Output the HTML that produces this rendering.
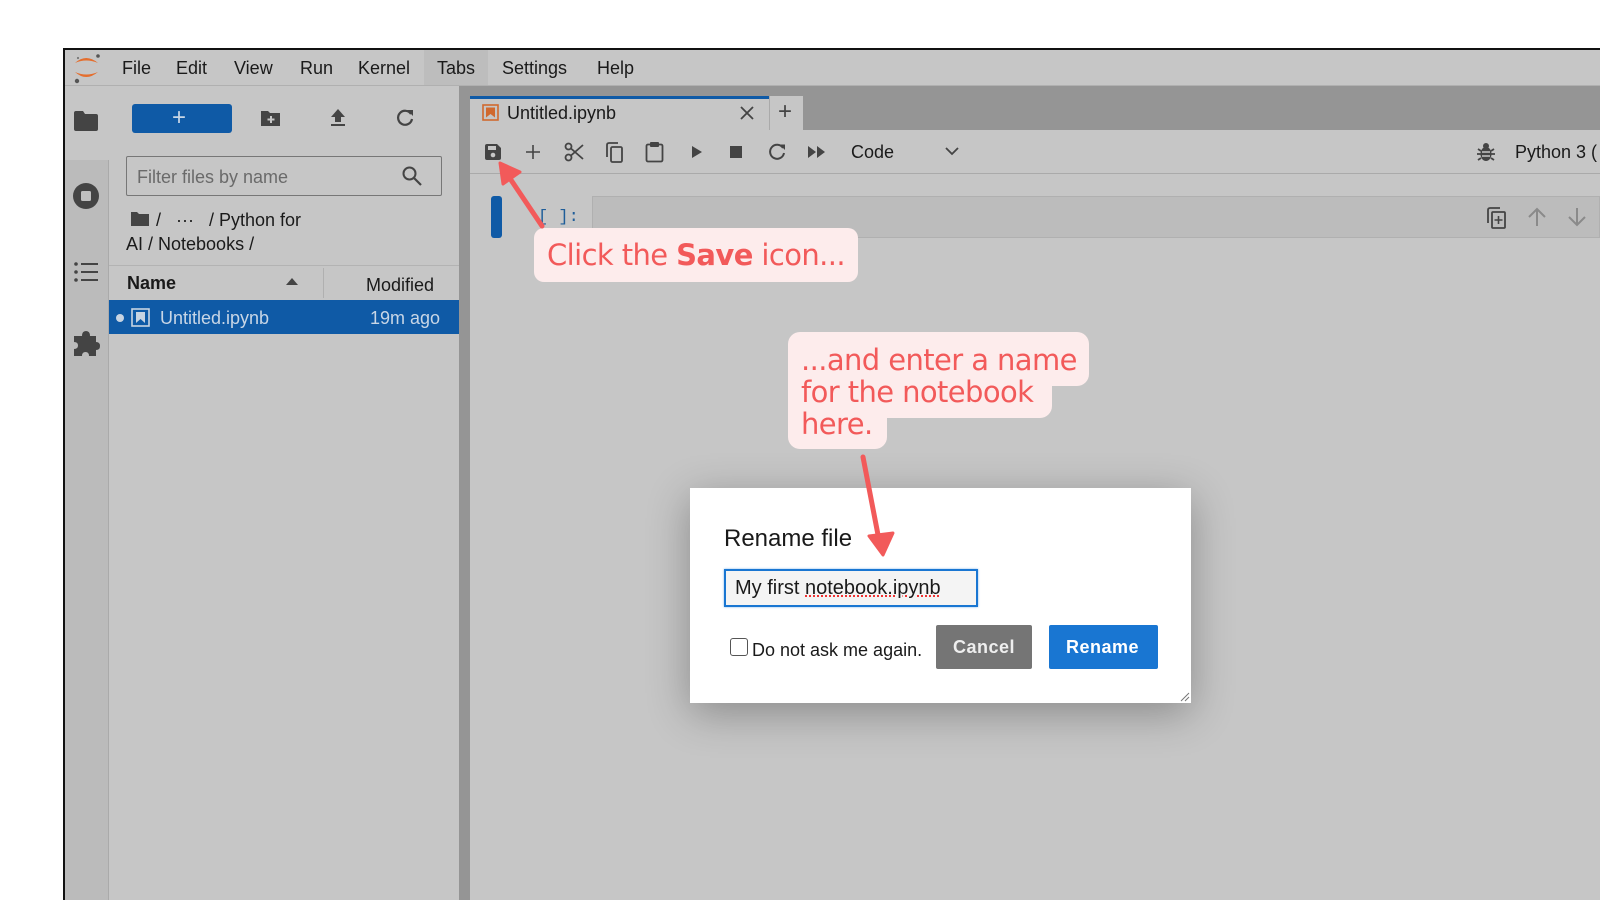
<!DOCTYPE html>
<html><head><meta charset="utf-8"><style>
*{margin:0;padding:0;box-sizing:border-box}
body{width:1600px;height:900px;background:#fff;position:relative;overflow:hidden;font-family:"Liberation Sans",sans-serif;color:#1a1a1a}
.a{position:absolute}
.t{position:absolute;white-space:nowrap;line-height:1}
</style></head><body>
<div class="a" style="left:63px;top:48px;width:1537px;height:852px;background:#c6c6c6;border-left:2px solid #111;border-top:2px solid #111"></div>
<div class="a" style="left:65px;top:50px;width:1535px;height:36px;background:#c6c6c6;border-bottom:1px solid #b0b0b0"></div>
<div class="a" style="left:424px;top:50px;width:64px;height:35px;background:#bdbdbd"></div>
<svg class="a" style="left:71px;top:51px" width="32" height="34" viewBox="0 0 32 34">
<path d="M4 12 Q15 2 27 12 Q15 7 4 12Z" fill="#e46e2e"/><path d="M4 21 Q15 31 27 21 Q15 26 4 21Z" fill="#e46e2e"/>
<circle cx="27" cy="5" r="1.8" fill="#555"/><circle cx="6" cy="30" r="2.2" fill="#555"/><circle cx="7" cy="7" r="1.1" fill="#777"/></svg>
<div class="t" style="left:122px;top:59px;font-size:18px">File</div>
<div class="t" style="left:176px;top:59px;font-size:18px">Edit</div>
<div class="t" style="left:234px;top:59px;font-size:18px">View</div>
<div class="t" style="left:300px;top:59px;font-size:18px">Run</div>
<div class="t" style="left:358px;top:59px;font-size:18px">Kernel</div>
<div class="t" style="left:437px;top:59px;font-size:18px">Tabs</div>
<div class="t" style="left:502px;top:59px;font-size:18px">Settings</div>
<div class="t" style="left:597px;top:59px;font-size:18px">Help</div>
<div class="a" style="left:65px;top:86px;width:44px;height:814px;background:#bbbbbb;border-right:1px solid #aaa"></div>
<div class="a" style="left:65px;top:86px;width:44px;height:74px;background:#c6c6c6"></div>
<svg class="a" style="left:73px;top:110px" width="26" height="22" viewBox="0 0 26 22"><path d="M1 3 Q1 1 3 1 H10 L12 4 H23 Q25 4 25 6 V19 Q25 21 23 21 H3 Q1 21 1 19Z" fill="#444"/></svg>
<svg class="a" style="left:71px;top:181px" width="30" height="30" viewBox="0 0 30 30"><circle cx="15" cy="15" r="13" fill="#444"/><rect x="10" y="10" width="10" height="10" rx="1.5" fill="#c0c0c0"/></svg>
<svg class="a" style="left:73px;top:261px" width="26" height="22" viewBox="0 0 26 22"><g fill="#444"><circle cx="3" cy="3" r="1.8"/><circle cx="3" cy="11" r="1.8"/><circle cx="3" cy="19" r="1.8"/><rect x="8" y="2" width="17" height="2"/><rect x="8" y="10" width="17" height="2"/><rect x="8" y="18" width="17" height="2"/></g></svg>
<svg class="a" style="left:72px;top:330px" width="28" height="28" viewBox="0 0 28 28"><path d="M10 6 Q10 1 14 1 Q18 1 18 6 H24 V12 Q28 12 28 16 Q28 20 24 20 V26 H17 Q17 22 13.5 22 Q10 22 10 26 H2 V19 Q6 19 6 15.5 Q6 12 2 12 V6Z" fill="#444"/></svg>
<div class="a" style="left:132px;top:104px;width:100px;height:29px;background:#0f5aa6;border-radius:3px"></div>
<div class="t" style="left:172px;top:106px;font-size:24px;color:#c8d6e6">+</div>
<svg class="a" style="left:260px;top:109px" width="21" height="18" viewBox="0 0 21 18"><path d="M1 2 H8 L10 4 H20 V17 H1Z" fill="#444"/><path d="M11 7 V14 M7.5 10.5 H14.5" stroke="#c6c6c6" stroke-width="2"/></svg>
<svg class="a" style="left:329px;top:108px" width="18" height="20" viewBox="0 0 18 20"><path d="M9 1 L16 9 H12 V14 H6 V9 H2Z" fill="#444"/><rect x="2" y="16" width="14" height="2" fill="#444"/></svg>
<svg class="a" style="left:395px;top:108px" width="20" height="20" viewBox="0 0 20 20"><path d="M16 6 A7 7 0 1 0 17 11" fill="none" stroke="#444" stroke-width="2.2"/><path d="M12 2 H18 V8Z" fill="#444"/></svg>
<div class="a" style="left:126px;top:156px;width:316px;height:40px;border:1.5px solid #777;border-radius:2px"></div>
<div class="t" style="left:137px;top:168px;font-size:18px;color:#6a6a6a">Filter files by name</div>
<svg class="a" style="left:401px;top:165px" width="22" height="22" viewBox="0 0 22 22"><circle cx="8.5" cy="8.5" r="6" fill="none" stroke="#444" stroke-width="2"/><path d="M13 13 L20 20" stroke="#444" stroke-width="2.2"/></svg>
<svg class="a" style="left:130px;top:211px" width="20" height="16" viewBox="0 0 20 16"><path d="M1 1 H7 L9 3 H19 V15 H1Z" fill="#444"/></svg>
<div class="t" style="left:156px;top:211px;font-size:18px">/ &nbsp;&nbsp;··· &nbsp;&nbsp;/ Python for</div>
<div class="t" style="left:126px;top:235px;font-size:18px">AI / Notebooks /</div>
<div class="a" style="left:109px;top:265px;width:350px;height:1px;background:#b3b3b3"></div>
<div class="t" style="left:127px;top:274px;font-size:18px;font-weight:bold">Name</div>
<svg class="a" style="left:286px;top:278px" width="12" height="8"><path d="M0 7 L6 0 L12 7Z" fill="#444"/></svg>
<div class="a" style="left:323px;top:268px;width:1px;height:30px;background:#b0b0b0"></div>
<div class="t" style="left:366px;top:276px;font-size:18px">Modified</div>
<div class="a" style="left:109px;top:300px;width:350px;height:34px;background:#0f5aa6"></div>
<div class="a" style="left:116px;top:314px;width:8px;height:8px;border-radius:50%;background:#c8d4e2"></div>
<svg class="a" style="left:131px;top:308px" width="19" height="19" viewBox="0 0 19 19"><rect x="1" y="1" width="17" height="17" fill="none" stroke="#c8d4e2" stroke-width="1.6"/><path d="M5 4 H14 V15 L9.5 11 L5 15Z" fill="#c8d4e2"/></svg>
<div class="t" style="left:160px;top:309px;font-size:18px;color:#c8d6e6">Untitled.ipynb</div>
<div class="t" style="left:370px;top:309px;font-size:18px;color:#c8d6e6">19m ago</div>
<div class="a" style="left:459px;top:86px;width:11px;height:814px;background:#959595"></div>
<div class="a" style="left:470px;top:86px;width:1130px;height:44px;background:#959595"></div>
<div class="a" style="left:470px;top:96px;width:299px;height:34px;background:#c6c6c6;border-top:3px solid #0f5aa6"></div>
<div class="a" style="left:769px;top:96px;width:34px;height:34px;background:#c6c6c6;border-left:1px solid #aaa"></div>
<div class="t" style="left:778px;top:100px;font-size:24px;color:#444">+</div>
<svg class="a" style="left:482px;top:104px" width="17" height="17" viewBox="0 0 17 17"><rect x="1" y="1" width="15" height="15" fill="none" stroke="#d0692f" stroke-width="1.6"/><path d="M4 3.5 H13 V13.5 L8.5 10 L4 13.5Z" fill="#d0692f"/></svg>
<div class="t" style="left:507px;top:104px;font-size:18px">Untitled.ipynb</div>
<svg class="a" style="left:739px;top:105px" width="16" height="16"><path d="M2 2 L14 14 M14 2 L2 14" stroke="#444" stroke-width="1.8"/></svg>
<div class="a" style="left:470px;top:130px;width:1130px;height:44px;background:#c6c6c6;border-bottom:1px solid #aaa"></div>
<svg class="a" style="left:484px;top:143px" width="18" height="18" viewBox="0 0 18 18"><path d="M1 3 Q1 1 3 1 H13 L17 5 V15 Q17 17 15 17 H3 Q1 17 1 15Z" fill="#444"/><rect x="4" y="3" width="8" height="4" fill="#c6c6c6"/><circle cx="9" cy="12" r="2.3" fill="#c6c6c6"/></svg>
<svg class="a" style="left:525px;top:144px" width="16" height="16"><path d="M8 1 V15 M1 8 H15" stroke="#444" stroke-width="1.6"/></svg>
<svg class="a" style="left:564px;top:142px" width="20" height="20" viewBox="0 0 20 20"><circle cx="4.5" cy="4.5" r="3" fill="none" stroke="#444" stroke-width="1.8"/><circle cx="4.5" cy="15.5" r="3" fill="none" stroke="#444" stroke-width="1.8"/><path d="M7 6.5 L19 17 M7 13.5 L19 3" stroke="#444" stroke-width="1.8"/></svg>
<svg class="a" style="left:606px;top:142px" width="18" height="21" viewBox="0 0 18 21"><path d="M12 1 H3 Q1 1 1 3 V15" fill="none" stroke="#444" stroke-width="1.8"/><rect x="5" y="5" width="11" height="15" rx="1.5" fill="none" stroke="#444" stroke-width="1.8"/></svg>
<svg class="a" style="left:645px;top:141px" width="19" height="22" viewBox="0 0 19 22"><rect x="1.5" y="3.5" width="16" height="17" rx="1.5" fill="none" stroke="#444" stroke-width="1.8"/><rect x="5" y="1" width="9" height="5" rx="1" fill="#444"/></svg>
<svg class="a" style="left:691px;top:145px" width="12" height="14"><path d="M1 1 L11 7 L1 13Z" fill="#444"/></svg>
<div class="a" style="left:730px;top:146px;width:12px;height:12px;background:#444"></div>
<svg class="a" style="left:767px;top:142px" width="20" height="20" viewBox="0 0 20 20"><path d="M16 6 A7 7 0 1 0 17 11" fill="none" stroke="#444" stroke-width="2"/><path d="M12.5 2.5 H18 V8Z" fill="#444"/></svg>
<svg class="a" style="left:808px;top:146px" width="18" height="12"><path d="M0 0 L8 6 L0 12Z M9 0 L17 6 L9 12Z" fill="#444"/></svg>
<div class="t" style="left:851px;top:143px;font-size:18px">Code</div>
<svg class="a" style="left:945px;top:147px" width="14" height="9"><path d="M1 1 L7 7 L13 1" fill="none" stroke="#444" stroke-width="1.8"/></svg>
<svg class="a" style="left:1477px;top:142px" width="18" height="20" viewBox="0 0 18 20"><ellipse cx="9" cy="12" rx="5.5" ry="7" fill="#444"/><circle cx="9" cy="4" r="3" fill="#444"/><path d="M1 7 L4 9 M17 7 L14 9 M0 12 H4 M18 12 H14 M1 18 L4 16 M17 18 L14 16" stroke="#444" stroke-width="1.8"/><path d="M5 10 H13 M5 14 H13" stroke="#c6c6c6" stroke-width="1.4"/></svg>
<div class="t" style="left:1515px;top:143px;font-size:18px">Python 3 (</div>
<div class="a" style="left:491px;top:196px;width:11px;height:42px;background:#0f5aa6;border-radius:3px"></div>
<div class="t" style="left:538px;top:209px;font-size:17px;font-family:'Liberation Mono',monospace;color:#1f5d99">[ ]:</div>
<div class="a" style="left:592px;top:196px;width:1008px;height:42px;background:#bcbcbc;border:1px solid #b0b0b0"></div>
<svg class="a" style="left:1487px;top:207px" width="20" height="22" viewBox="0 0 20 22"><path d="M13 1 H3 Q1 1 1 3 V16" fill="none" stroke="#444" stroke-width="1.8"/><rect x="5" y="5" width="13" height="16" rx="1" fill="none" stroke="#444" stroke-width="1.8"/><path d="M11.5 9 V17 M7.5 13 H15.5" stroke="#444" stroke-width="1.6"/></svg>
<svg class="a" style="left:1527px;top:207px" width="20" height="20"><path d="M10 19 V2 M2 10 L10 2 L18 10" fill="none" stroke="#8a8a8a" stroke-width="2"/></svg>
<svg class="a" style="left:1567px;top:207px" width="20" height="20"><path d="M10 1 V18 M2 10 L10 18 L18 10" fill="none" stroke="#8a8a8a" stroke-width="2"/></svg>
<div class="a" style="left:534px;top:228px;width:324px;height:54px;background:#fdecec;border-radius:10px"></div>
<div class="t" style="left:547px;top:241px;font-size:29px;color:#f25a5a;font-family:'DejaVu Sans',sans-serif;letter-spacing:-0.6px">Click the <b>Save</b> icon...</div>
<svg class="a" style="left:495px;top:160px" width="60" height="70"><path d="M47 66 L12 14" stroke="#f25a5a" stroke-width="5" stroke-linecap="round"/><path d="M5 3 L25 12 L8 24Z" fill="#f25a5a" stroke="#f25a5a" stroke-width="3" stroke-linejoin="round"/></svg>
<div class="a" style="left:788px;top:332px;width:301px;height:54px;background:#fdecec;border-radius:12px"></div>
<div class="a" style="left:788px;top:370px;width:264px;height:48px;background:#fdecec;border-radius:0 0 12px 12px"></div>
<div class="a" style="left:788px;top:405px;width:99px;height:44px;background:#fdecec;border-radius:0 0 12px 12px"></div>
<div class="t" style="left:801px;top:344px;font-size:29px;line-height:32px;color:#f25a5a;font-family:'DejaVu Sans',sans-serif;letter-spacing:-0.6px">...and enter a name<br>for the notebook<br>here.</div>
<div class="a" style="left:690px;top:488px;width:501px;height:215px;background:#fff;box-shadow:0 10px 40px rgba(0,0,0,0.3)"></div>
<div class="t" style="left:724px;top:527px;font-size:24px">Rename file</div>
<div class="a" style="left:724px;top:569px;width:254px;height:38px;border:2px solid #1976d2;background:#f4f4f4;box-shadow:0 0 2px #7ab0e8"></div>
<div class="t" style="left:735px;top:578px;font-size:20px">My first <span style="text-decoration:underline dotted #e33">notebook.ipynb</span></div>
<div class="a" style="left:730px;top:638px;width:18px;height:18px;border:1.5px solid #555;border-radius:3px"></div>
<div class="t" style="left:752px;top:641px;font-size:18px">Do not ask me again.</div>
<div class="a" style="left:936px;top:625px;width:96px;height:44px;background:#757575;border-radius:2px"></div>
<div class="t" style="left:953px;top:638px;font-size:18px;color:#eee;font-weight:bold;letter-spacing:0.5px">Cancel</div>
<div class="a" style="left:1049px;top:625px;width:109px;height:44px;background:#1976d2;border-radius:2px"></div>
<div class="t" style="left:1066px;top:638px;font-size:18px;color:#fff;font-weight:bold;letter-spacing:0.5px">Rename</div>
<svg class="a" style="left:1180px;top:692px" width="10" height="10"><path d="M1 9 L9 1 M5 9 L9 5" stroke="#777" stroke-width="1"/></svg>
<svg class="a" style="left:850px;top:450px" width="50" height="115"><path d="M13 7 L29 90" stroke="#f25a5a" stroke-width="5" stroke-linecap="round"/><path d="M19 86 L43 83 L33 105Z" fill="#f25a5a" stroke="#f25a5a" stroke-width="3" stroke-linejoin="round"/></svg>
</body></html>
